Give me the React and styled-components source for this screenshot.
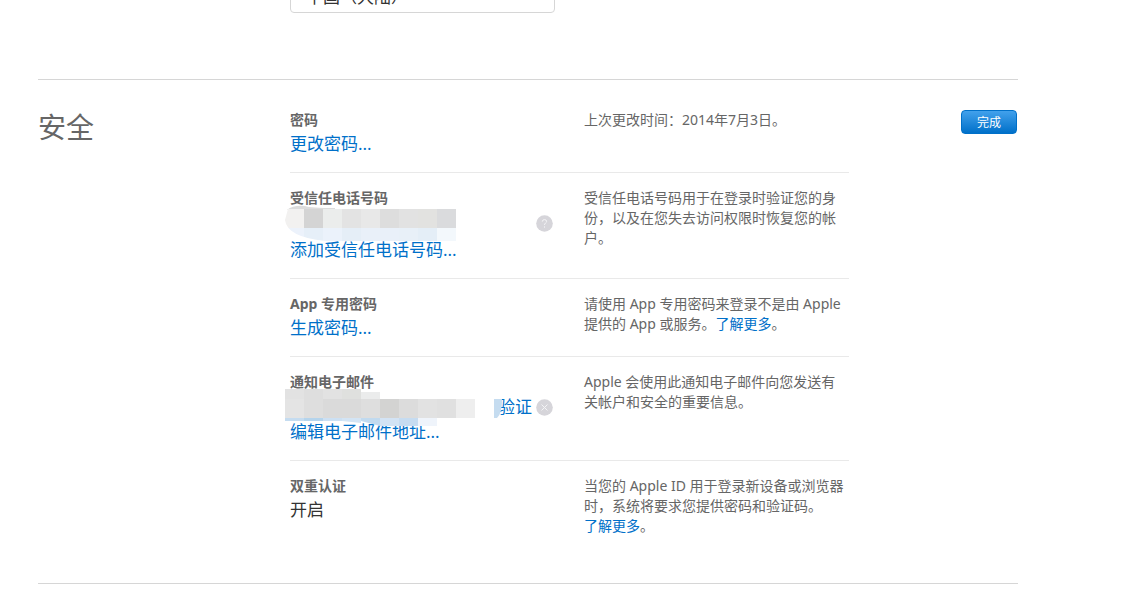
import React from 'react';
import styled, { createGlobalStyle } from 'styled-components';

const Global = createGlobalStyle`
  * { box-sizing: border-box; }
  body {
    margin: 0;
    background: #fff;
    color: #333;
    font: 14px/20px "Noto Sans", "Noto Sans CJK SC", sans-serif;
  }
`;

const Page = styled.main`
  max-width: 1056px;
  padding: 0 38px;
`;

const Grid = styled.div`
  display: grid;
  grid-template-columns: 252px minmax(0, 559px) 1fr;
`;

const RegionSection = styled(Grid)`
  height: 79px;
`;

const RegionCrop = styled.div`
  grid-column: 2;
  display: flex;
  align-items: flex-end;
  height: 13px;
  overflow: hidden;
`;

const RegionSelect = styled.select`
  appearance: none;
  flex: none;
  width: 265px;
  height: 34px;
  padding: 0 15px;
  border: 1px solid #d6d6d6;
  border-radius: 4px;
  background: #fff;
  color: #333;
  font: 17px/28px "Noto Sans CJK SC", sans-serif;
`;

const Security = styled(Grid).attrs({ as: 'section' })`
  padding: 30px 0 47px;
  border: solid #d6d6d6;
  border-width: 1px 0;
`;

const Title = styled.h2`
  margin: 0;
  color: #666;
  font-size: 28px;
  font-weight: 400;
  line-height: 34px;
`;

const Row = styled.div`
  display: grid;
  grid-template-columns: 294px minmax(0, 1fr);
  padding-bottom: 14px;
  & + & {
    padding-top: 15px;
    border-top: 1px solid #e9e9e9;
  }
  &:last-child { padding-bottom: 0; }
`;

const Label = styled.h3`
  margin: 0;
  color: #666;
  font-size: 14px;
  font-weight: 700;
  line-height: 20px;
`;

const Value = styled.div`
  font-size: 17px;
  line-height: 28px;
`;

const Link = styled.a`
  color: #0070c9;
  text-decoration: none;
`;

const Note = styled.p`
  margin: 0;
  color: #666;
`;

const Masked = styled.div`
  position: relative;
  display: flex;
  align-items: center;
  justify-content: flex-end;
  gap: 4px;
  width: 263px;
  height: ${(p) => p.$height}px;
  padding-top: ${(p) => p.$top}px;
  font-size: 17px;
  line-height: 24px;
`;

const Mosaic = styled.svg`
  position: absolute;
  left: -5px;
  top: -3px;
`;

const IconButton = styled.button`
  display: flex;
  padding: 0;
  border: 0;
  background: none;
`;

const DoneButton = styled.button`
  justify-self: end;
  align-self: start;
  width: 56px;
  height: 24px;
  margin-right: 1px;
  padding: 0;
  border: 1px solid #0070c9;
  border-radius: 4px;
  background: linear-gradient(#42a1ec, #0070c9);
  color: #fff;
  font: 12px/20px "Noto Sans CJK SC", sans-serif;
`;

const Tiles = ({ y, height, colors }) =>
  colors.map((c, i) => c && <rect key={i} x={i * 19} y={y} width="19" height={height} fill={c} />);

const PhoneMosaic = () => (
  <Mosaic width="171" height="36" viewBox="0 0 171 36" aria-hidden="true">
    <path d="M2 5Q8 0 20 1Q26 3 50 3V5Z" fill="#dcdcdc" />
    <clipPath id="phone"><path d="M3 4H171V36H40Q2 32 0 15Z" /></clipPath>
    <g clipPath="url(#phone)">
      <Tiles y={4} height={19} colors={['#f2f1f0', '#d4d4d4', '#ebedec', '#e3e3e3', '#e8e8e8', '#dddddd', '#e2e2e2', '#e2e2e0', '#dadbdd']} />
      <Tiles y={23} height={13} colors={['#ecf2fb', '#e6eff8', '#ebf2fb', '#e5eef7', '#e9f0f9', '#e9f0f9', '#e8f0f8', '#e4eef7', '#f3f8fc']} />
    </g>
  </Mosaic>
);

const EmailMosaic = () => (
  <Mosaic width="220" height="38" viewBox="0 0 220 38" aria-hidden="true">
    <Tiles y={0} height={10} colors={['#e2e2e2', '#dedede', '#e2e2e2', '#dfe0de']} />
    <rect x="76" y="3" width="19" height="7" fill="#ebecec" />
    <Tiles y={10} height={19} colors={['#e4e4e4', '#dedede', '#dadada', '#dadada', '#dedede', '#d3d3d2', '#dcdcdc', '#e2e2e2', '#e0e0e0', '#eeeeee']} />
    <Tiles y={29} height={3} colors={['#c5dcf0', '#b5d4ec', '#cce0f3', '#d3e4f4', '#c1daef', '#d3e3f4', '#c6dcf1', '#eff4fb']} />
    <path d="M57 32H76V34Z" fill="#d3e4f4" />
    <path d="M76 32H95V37Z" fill="#c1daef" />
    <rect x="95" y="32" width="19" height="5" fill="#d3e3f4" />
    <rect x="114" y="32" width="19" height="5" fill="#c6dcf1" />
    <rect x="133" y="32" width="19" height="5" fill="#eff4fb" />
    <path d="M209 10H217Q217 25 212 29H209Z" fill="#c5dcf0" />
  </Mosaic>
);

export default function App() {
  return (
    <>
      <Global />
      <Page>
        <RegionSection>
          <RegionCrop>
            <RegionSelect aria-label="国家或地区" defaultValue="cn">
              <option value="cn">中国（大陆）</option>
            </RegionSelect>
          </RegionCrop>
        </RegionSection>
        <Security>
          <Title>安全</Title>
          <div>
            <Row>
              <div>
                <Label>密码</Label>
                <Value><Link href="#password">更改密码...</Link></Value>
              </div>
              <Note>上次更改时间：2014年7月3日。</Note>
            </Row>
            <Row>
              <div>
                <Label>受信任电话号码</Label>
                <Masked $height={28} $top={2}>
                  <PhoneMosaic />
                  <IconButton type="button" aria-label="帮助">
                    <svg width="17" height="17" viewBox="0 0 17 17">
                      <circle cx="8.5" cy="8.5" r="8.3" fill="#d6d5da" />
                      <path d="M6.3 6.6Q6.4 4.6 8.5 4.6Q10.6 4.6 10.6 6.4Q10.6 7.4 9.5 8.1Q8.5 8.8 8.5 9.9M8.5 11.4V12.6" fill="none" stroke="#f6f6f8" />
                    </svg>
                  </IconButton>
                </Masked>
                <Value><Link href="#phone-add">添加受信任电话号码...</Link></Value>
              </div>
              <Note>受信任电话号码用于在登录时验证您的身份，以及在您失去访问权限时恢复您的帐户。</Note>
            </Row>
            <Row>
              <div>
                <Label>App 专用密码</Label>
                <Value><Link href="#generate">生成密码...</Link></Value>
              </div>
              <Note>请使用 App 专用密码来登录不是由 Apple 提供的 App 或服务。<Link href="#app-more">了解更多</Link>。</Note>
            </Row>
            <Row>
              <div>
                <Label>通知电子邮件</Label>
                <Masked $height={26} $top={4}>
                  <Link href="#verify">验证</Link>
                  <EmailMosaic />
                  <IconButton type="button" aria-label="移除">
                    <svg width="17" height="17" viewBox="0 0 17 17">
                      <circle cx="8.5" cy="8.5" r="8.3" fill="#d6d5da" />
                      <path d="M5.5 5.5L11.5 11.5M11.5 5.5L5.5 11.5" stroke="#f4f4f6" />
                    </svg>
                  </IconButton>
                </Masked>
                <Value><Link href="#email-edit">编辑电子邮件地址...</Link></Value>
              </div>
              <Note>Apple 会使用此通知电子邮件向您发送有关帐户和安全的重要信息。</Note>
            </Row>
            <Row>
              <div>
                <Label>双重认证</Label>
                <Value>开启</Value>
              </div>
              <Note>当您的 Apple ID 用于登录新设备或浏览器时，系统将要求您提供密码和验证码。<br /><Link href="#two-factor-more">了解更多</Link>。</Note>
            </Row>
          </div>
          <DoneButton type="button">完成</DoneButton>
        </Security>
      </Page>
    </>
  );
}
